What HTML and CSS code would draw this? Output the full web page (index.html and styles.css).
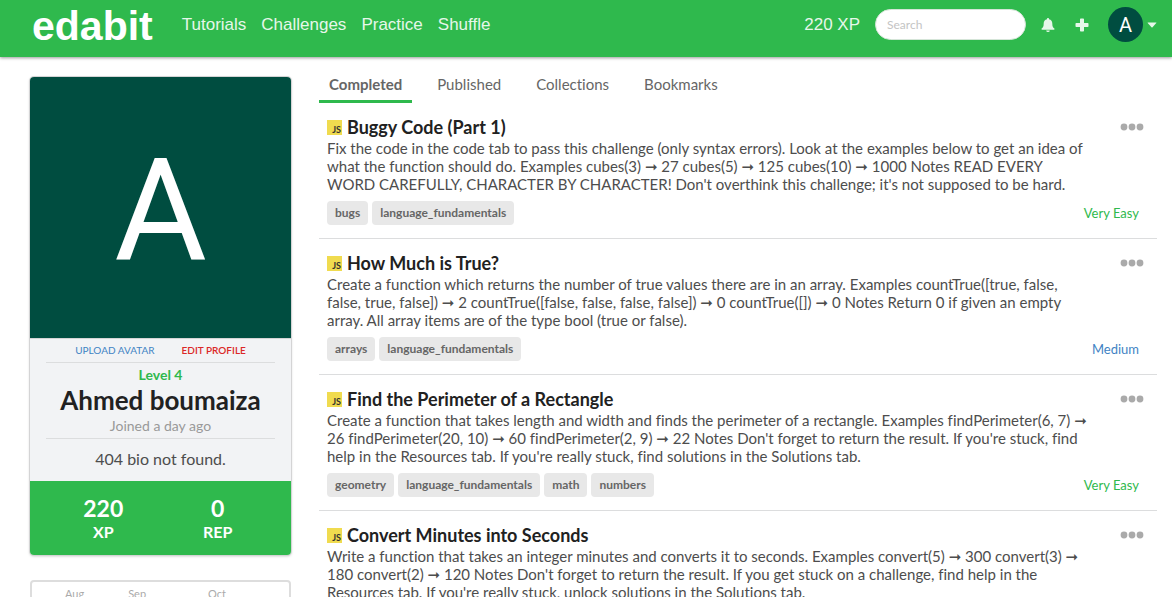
FILE: index.html
```html
<!DOCTYPE html>
<html lang="en">
<head>
<meta charset="utf-8">
<title>Ahmed boumaiza | Edabit</title>
<link rel="stylesheet" href="styles.css">
</head>
<body>
<div class="app">
  <header class="topbar">
    <a class="brand" href="#">edabit</a>
    <nav class="nav">
      <a href="#">Tutorials</a>
      <a href="#">Challenges</a>
      <a href="#">Practice</a>
      <a href="#">Shuffle</a>
    </nav>
    <span class="xp">220 XP</span>
    <input class="search" type="search" placeholder="Search" aria-label="Search">
    <button class="icon-btn bell" type="button" aria-label="Notifications">
      <svg width="14" height="14" viewBox="0 0 14 14"><path fill="currentColor" d="M7 0a1 1 0 0 1 1 1.200C10.200 1.700 11.300 3.500 11.300 5.500c0 3 .7 4 2 5 .5.500.300 1.300-.5 1.300H1.200c-.8 0-1-.8-.5-1.300 1.300-1 2-2 2-5 0-2 1.100-3.800 3.300-4.300A1 1 0 0 1 7 0zM5.200 12.400h3.600a1.800 1.600 0 0 1-3.600 0z"/></svg>
    </button>
    <button class="icon-btn plus" type="button" aria-label="Create">
      <svg width="14" height="14" viewBox="0 0 14 14"><path fill="currentColor" d="M5.800.5h2.400q.8 0 .8.800V5h3.700q.8 0 .8.800v2.400q0 .8-.8.800H9v3.700q0 .8-.8.800H5.800q-.8 0-.8-.8V9H1.300q-.8 0-.8-.8V5.800q0-.8.800-.8H5V1.300q0-.8.800-.8z"/></svg>
    </button>
    <button class="account" type="button" aria-label="Account menu">
      <span class="account-avatar">A</span>
      <svg width="10" height="6" viewBox="0 0 10 6"><path fill="currentColor" d="M1 .5h8q.8 0 .3.600L5.500 5.200q-.5.500-1 0L.7 1.100Q.2.500 1 .5z"/></svg>
    </button>
  </header>

  <div class="page">
    <aside class="sidebar">
      <section class="card">
        <div class="portrait">A</div>
        <div class="details">
          <div class="actions">
            <a class="upload" href="#">UPLOAD AVATAR</a>
            <a class="edit" href="#">EDIT PROFILE</a>
          </div>
          <div class="identity">
            <div class="level">Level 4</div>
            <h1 class="name">Ahmed boumaiza</h1>
            <div class="joined">Joined a day ago</div>
          </div>
          <p class="bio">404 bio not found.</p>
        </div>
        <div class="stats">
          <div class="stat"><span class="value">220</span><span class="label">XP</span></div>
          <div class="stat"><span class="value">0</span><span class="label">REP</span></div>
        </div>
      </section>
      <section class="activity">
        <span>Aug</span><span>Sep</span><span>Oct</span>
      </section>
    </aside>

    <main class="main">
      <nav class="tabs">
        <a class="tab active" href="#">Completed</a>
        <a class="tab" href="#">Published</a>
        <a class="tab" href="#">Collections</a>
        <a class="tab" href="#">Bookmarks</a>
      </nav>

      <article class="challenge">
        <div class="heading"><span class="js">JS</span><h2 class="title"><a href="#">Buggy Code (Part 1)</a></h2>
          <button class="more" type="button" aria-label="More"><svg width="24" height="8" viewBox="0 0 24 8" fill="currentColor"><circle cx="4" cy="4" r="3.400"/><circle cx="12" cy="4" r="3.400"/><circle cx="20" cy="4" r="3.400"/></svg></button></div>
        <p class="text">Fix the code in the code tab to pass this challenge (only syntax errors). Look at the examples below to get an idea of what the function should do. Examples cubes(3) ➞ 27 cubes(5) ➞ 125 cubes(10) ➞ 1000 Notes READ EVERY WORD CAREFULLY, CHARACTER BY CHARACTER! Don't overthink this challenge; it's not supposed to be hard.</p>
        <div class="meta"><a class="tag" href="#">bugs</a><a class="tag" href="#">language_fundamentals</a><span class="difficulty easy">Very Easy</span></div>
      </article>

      <article class="challenge">
        <div class="heading"><span class="js">JS</span><h2 class="title"><a href="#">How Much is True?</a></h2>
          <button class="more" type="button" aria-label="More"><svg width="24" height="8" viewBox="0 0 24 8" fill="currentColor"><circle cx="4" cy="4" r="3.400"/><circle cx="12" cy="4" r="3.400"/><circle cx="20" cy="4" r="3.400"/></svg></button></div>
        <p class="text">Create a function which returns the number of true values there are in an array. Examples countTrue([true, false, false, true, false]) ➞ 2 countTrue([false, false, false, false]) ➞ 0 countTrue([]) ➞ 0 Notes Return 0 if given an empty array. All array items are of the type bool (true or false).</p>
        <div class="meta"><a class="tag" href="#">arrays</a><a class="tag" href="#">language_fundamentals</a><span class="difficulty medium">Medium</span></div>
      </article>

      <article class="challenge">
        <div class="heading"><span class="js">JS</span><h2 class="title"><a href="#">Find the Perimeter of a Rectangle</a></h2>
          <button class="more" type="button" aria-label="More"><svg width="24" height="8" viewBox="0 0 24 8" fill="currentColor"><circle cx="4" cy="4" r="3.400"/><circle cx="12" cy="4" r="3.400"/><circle cx="20" cy="4" r="3.400"/></svg></button></div>
        <p class="text">Create a function that takes length and width and finds the perimeter of a rectangle. Examples findPerimeter(6, 7) ➞ 26 findPerimeter(20, 10) ➞ 60 findPerimeter(2, 9) ➞ 22 Notes Don't forget to return the result. If you're stuck, find help in the Resources tab. If you're really stuck, find solutions in the Solutions tab.</p>
        <div class="meta"><a class="tag" href="#">geometry</a><a class="tag" href="#">language_fundamentals</a><a class="tag" href="#">math</a><a class="tag" href="#">numbers</a><span class="difficulty easy">Very Easy</span></div>
      </article>

      <article class="challenge">
        <div class="heading"><span class="js">JS</span><h2 class="title"><a href="#">Convert Minutes into Seconds</a></h2>
          <button class="more" type="button" aria-label="More"><svg width="24" height="8" viewBox="0 0 24 8" fill="currentColor"><circle cx="4" cy="4" r="3.400"/><circle cx="12" cy="4" r="3.400"/><circle cx="20" cy="4" r="3.400"/></svg></button></div>
        <p class="text">Write a function that takes an integer minutes and converts it to seconds. Examples convert(5) ➞ 300 convert(3) ➞ 180 convert(2) ➞ 120 Notes Don't forget to return the result. If you get stuck on a challenge, find help in the Resources tab. If you're really stuck, unlock solutions in the Solutions tab.</p>
      </article>
    </main>
  </div>
</div>
</body>
</html>
```
FILE: styles.css
```css
* { box-sizing: border-box; }
body {
  margin: 0;
  background: #fff;
  color: #4d4d4d;
  font: 15px/18px Lato, "DejaVu Sans", sans-serif;
  font-variant-ligatures: none;
}
h1, h2, p { margin: 0; }
a { color: inherit; text-decoration: none; }
button { padding: 0; border: 0; background: none; color: inherit; font: inherit; cursor: pointer; }
svg { display: block; }
.app { height: 100vh; overflow: hidden; }

.topbar {
  display: flex;
  align-items: center;
  height: 57px;
  padding: 0 15px 8px 32px;
  background: #2fb94d;
  box-shadow: 0 1px 3px rgba(0, 0, 0, .4);
  color: #e6f7ea;
  font: 17px/20px "Liberation Sans", Arial, sans-serif;
}
.brand { padding-top: 4px; color: #fff; font-size: 41px; font-weight: 700; line-height: 45px; }
.nav { display: flex; gap: 15px; margin-left: 29px; }
.xp { margin-left: auto; }
.search {
  width: 151px;
  height: 31px;
  margin: 0 15px;
  padding: 0 11px;
  border: 1px solid #d5e5d8;
  border-radius: 16px;
  background: #fff;
  font: 12px/16px Lato, sans-serif;
  appearance: none;
}
.search::placeholder { color: #c4c4c4; }
.icon-btn { margin-right: 20px; }
.icon-btn.plus { margin-right: 19px; }
.account { display: flex; align-items: center; gap: 4px; }
.account-avatar {
  width: 35px;
  height: 35px;
  border-radius: 50%;
  background: #004d40;
  color: #fff;
  font: 20px/36px Roboto, sans-serif;
}

.page {
  display: grid;
  grid-template-columns: 19fr 61fr;
  gap: 28px;
  padding: 12px 15px 0 30px;
}
.sidebar { padding-top: 8px; }
.card { border-radius: 4px; overflow: hidden; box-shadow: 0 0 0 1px #d4d4d5, 0 1px 3px #bbb; }
.portrait {
  display: grid;
  place-items: center;
  aspect-ratio: 1;
  padding-top: 8px;
  background: #004d40;
  color: #fff;
  font: 142px/1 Roboto, sans-serif;
}
.details {
  padding: 0 16px 12px;
  border-top: 1px solid #d4d4d5;
  background: #f2f3f5;
  text-align: center;
}
.actions {
  display: flex;
  justify-content: center;
  gap: 27px;
  padding: 4px 0;
  border-bottom: 1px solid #dcddde;
  font-size: 10px;
  line-height: 15px;
}
.upload { color: #4183c4; }
.edit { color: #db2828; font-weight: 600; }
.identity { padding: 3px 0 2px; border-bottom: 1px solid #dcddde; }
.level { color: #2fb94d; font-size: 14px; font-weight: 700; line-height: 18px; }
.name { color: #212121; font-size: 26px; font-weight: 700; line-height: 32px; }
.joined { color: #999; font-size: 14px; line-height: 20px; }
.bio { padding-top: 10px; font-size: 16px; line-height: 20px; }
.stats {
  display: grid;
  grid-template-columns: 1fr 1fr;
  padding: 14px 16px;
  background: #2fb94d;
  color: #fff;
  font-weight: 700;
  text-align: center;
}
.stat { display: flex; flex-direction: column; }
.value { font-size: 23px; line-height: 27px; }
.label { font-size: 16px; line-height: 19px; }
.activity {
  display: flex;
  gap: 44px;
  height: 140px;
  margin-top: 25px;
  padding: 3px 33px;
  border: 2px solid #ddd;
  border-radius: 4px;
  color: #aaa;
  font-size: 11px;
}
.activity span:last-child { margin-left: 18px; }

.tabs { display: flex; gap: 15px; }
.tab { padding: 6px 10px 7px; border-bottom: 3px solid transparent; color: #666; line-height: 18px; }
.tab.active { border-color: #2fb94d; font-weight: 700; }

.challenge { padding: 13px 8px; border-bottom: 1px solid #dcddde; }
.heading { display: flex; align-items: center; height: 22px; margin-bottom: 1px; }
.js {
  width: 15px;
  height: 15px;
  padding: 5px 1px 0 0;
  background: #f0db4f;
  color: #323330;
  font-size: 9px;
  font-weight: 700;
  line-height: 10px;
  text-align: right;
}
.title { margin-left: 5px; color: #212121; font-size: 18px; font-weight: 700; line-height: 22px; }
.more { margin: 0 5px 0 auto; color: #aaa; }
.text { padding-right: 56px; }
.meta { display: flex; align-items: center; gap: 4px; padding-top: 8px; }
.tag {
  padding: 0 8px;
  border-radius: 4px;
  background: #e8e8e8;
  color: #666;
  font-size: 12px;
  font-weight: 700;
  line-height: 24px;
}
.difficulty { margin: 0 10px 0 auto; font-size: 13px; }
.easy { color: #2fb94d; }
.medium { color: #4183c4; }
```
